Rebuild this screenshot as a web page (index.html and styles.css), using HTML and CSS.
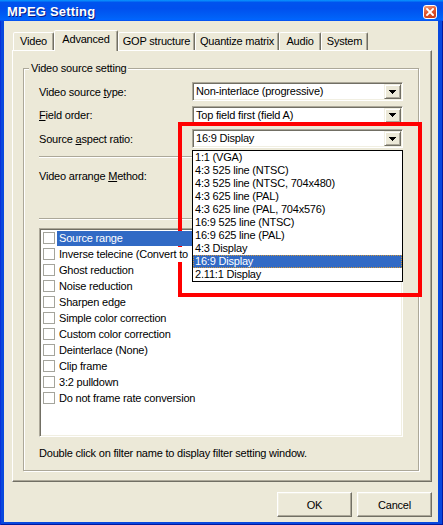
FILE: index.html
```html
<!DOCTYPE html>
<html lang="en">
<head>
<meta charset="utf-8">
<title>MPEG Setting</title>
<link rel="stylesheet" href="styles.css">
</head>
<body>
<div class="window">
  <div class="titlebar">
    <span class="title">MPEG Setting</span>
    <span class="close"><svg width="8" height="8" viewBox="0 0 8 8"><path d="M1 1L7 7M7 1L1 7" stroke="#fff" stroke-width="1.9" stroke-linecap="square"/></svg></span>
  </div>
  <div class="client">
    <div class="tabs">
      <div class="tab">Video</div>
      <div class="tab active">Advanced</div>
      <div class="tab">GOP structure</div>
      <div class="tab">Quantize matrix</div>
      <div class="tab">Audio</div>
      <div class="tab">System</div>
    </div>
    <div class="panel">
      <div class="group">
        <div class="group-title">Video source setting</div>
        <div class="field-row first">
          <span class="label">Video source <u>t</u>ype:</span>
          <div class="combo"><span class="combo-value">Non-interlace (progressive)</span><span class="combo-btn"><svg width="7" height="4" viewBox="0 0 7 4"><path d="M0 0h7v1H0zM1 1h5v1H1zM2 2h3v1H2zM3 3h1v1H3z"/></svg></span></div>
        </div>
        <div class="field-row">
          <span class="label"><u>F</u>ield order:</span>
          <div class="combo"><span class="combo-value">Top field first (field A)</span><span class="combo-btn"><svg width="7" height="4" viewBox="0 0 7 4"><path d="M0 0h7v1H0zM1 1h5v1H1zM2 2h3v1H2zM3 3h1v1H3z"/></svg></span></div>
        </div>
        <div class="field-row">
          <span class="label">Source <u>a</u>spect ratio:</span>
          <div class="combo"><span class="combo-value">16:9 Display</span><span class="combo-btn"><svg width="7" height="4" viewBox="0 0 7 4"><path d="M0 0h7v1H0zM1 1h5v1H1zM2 2h3v1H2zM3 3h1v1H3z"/></svg></span>
            <ul class="dropdown">
              <li>1:1 (VGA)</li>
              <li>4:3 525 line (NTSC)</li>
              <li>4:3 525 line (NTSC, 704x480)</li>
              <li>4:3 625 line (PAL)</li>
              <li>4:3 625 line (PAL, 704x576)</li>
              <li>16:9 525 line (NTSC)</li>
              <li>16:9 625 line (PAL)</li>
              <li>4:3 Display</li>
              <li class="selected">16:9 Display</li>
              <li>2.11:1 Display</li>
            </ul>
          </div>
        </div>
        <div class="sep first-sep"></div>
        <div class="field-row method">
          <span class="label">Video arrange <u>M</u>ethod:</span>
        </div>
        <div class="sep second-sep"></div>
        <div class="listbox">
          <div class="item selected over"><span class="check"></span><span class="item-label">Source range</span></div>
          <div class="item over"><span class="check"></span><span class="item-label">Inverse telecine (Convert to</span></div>
          <div class="item"><span class="check"></span><span class="item-label">Ghost reduction</span></div>
          <div class="item"><span class="check"></span><span class="item-label">Noise reduction</span></div>
          <div class="item"><span class="check"></span><span class="item-label">Sharpen edge</span></div>
          <div class="item"><span class="check"></span><span class="item-label">Simple color correction</span></div>
          <div class="item"><span class="check"></span><span class="item-label">Custom color correction</span></div>
          <div class="item"><span class="check"></span><span class="item-label">Deinterlace (None)</span></div>
          <div class="item"><span class="check"></span><span class="item-label">Clip frame</span></div>
          <div class="item"><span class="check"></span><span class="item-label">3:2 pulldown</span></div>
          <div class="item"><span class="check"></span><span class="item-label">Do not frame rate conversion</span></div>
        </div>
        <p class="hint">Double click on filter name to display filter setting window.</p>
      </div>
    </div>
    <div class="buttons">
      <button class="btn">OK</button>
      <button class="btn">Cancel</button>
    </div>
  </div>
  <div class="annotation"></div>
</div>
</body>
</html>
```
FILE: styles.css
```css
* { box-sizing: border-box; }
html, body { margin: 0; padding: 0; }
body {
  width: 443px;
  height: 525px;
  overflow: hidden;
  font-family: "Liberation Sans", Arial, sans-serif;
  font-size: 11px;
  letter-spacing: -0.2px;
  color: #000;
  background: #fff;
}
.window {
  position: relative;
  width: 443px;
  height: 525px;
  display: flex;
  flex-direction: column;
  background: #0848DE;
  box-shadow: inset 1px 0 #0831D9, inset -1px 0 #0019A0, inset 0 -1px #0019A0;
}
.titlebar {
  height: 21px;
  flex: none;
  display: flex;
  justify-content: space-between;
  align-items: flex-start;
  padding: 5px 6px 0 7px;
  background: linear-gradient(180deg, #0997ff, #0053ee 12%, #0050ee 40%, #0062f8 85%, #0066ff 92%, #005bff 96%, #0848DE);
}
.title {
  color: #fff;
  font-weight: bold;
  font-size: 13px;
  line-height: 14px;
  letter-spacing: 0.2px;
  text-shadow: 1px 1px #0A1883;
}
.close {
  width: 14px;
  height: 14px;
  border: 1px solid #fff;
  border-radius: 3px;
  background: linear-gradient(160deg, #F0A080, #E2582E 45%, #C73A17);
  display: flex;
  align-items: center;
  justify-content: center;
}
.client {
  flex: 1;
  margin: 0 5px 3px 4px;
  background: #ECE9D8;
  display: flex;
  flex-direction: column;
  padding: 9px 6px 5px 8px;
}
.tabs {
  display: flex;
  align-items: flex-end;
  height: 20px;
  flex: none;
  padding-left: 1px;
}
.tab {
  height: 18px;
  line-height: 17px;
  text-align: center;
  white-space: nowrap;
  border: 1px solid;
  border-bottom: none;
  border-color: #fff #716F64 transparent #fff;
  box-shadow: inset -1px 0 #ACA899;
  border-radius: 2px 2px 0 0;
  background: #ECE9D8;
}
.tab:nth-child(1) { width: 41px; }
.tab:nth-child(2) { width: 64px; }
.tab:nth-child(3) { width: 77px; }
.tab:nth-child(4) { width: 84px; }
.tab:nth-child(5) { width: 42px; }
.tab:nth-child(6) { width: 47px; }
.tab.active {
  height: 21px;
  margin-bottom: -1px;
  position: relative;
  z-index: 1;
}
.panel {
  height: 432px;
  flex: none;
  border: 1px solid;
  border-color: #fff #716F64 #716F64 #fff;
  box-shadow: inset -1px -1px #ACA899;
  padding: 0 12px 0 10px;
}
.group {
  margin-top: 17px;
  border: 1px solid #ACA899;
  box-shadow: 1px 1px 0 #fff, inset 1px 1px 0 #fff;
  padding: 0 15px 10.5px;
}
.group-title {
  display: table;
  margin: -7px 0 0 -10px;
  padding: 0 2px;
  line-height: 13px;
  background: #ECE9D8;
}
.field-row {
  display: flex;
  justify-content: space-between;
  align-items: center;
  height: 19px;
  margin-top: 4.5px;
}
.field-row.first { margin-top: 7px; }
.field-row.method { margin-top: 8.5px; }
.label { white-space: nowrap; }
.combo {
  position: relative;
  width: 211px;
  height: 19px;
  border: 1px solid;
  border-color: #ACA899 #fff #fff #ACA899;
  box-shadow: inset 1px 1px #716F64, inset -1px -1px #F1EFE2;
  padding: 1px;
  display: flex;
  background: #fff;
}
.combo-value {
  flex: 1;
  line-height: 15px;
  padding-left: 2px;
  white-space: nowrap;
  overflow: hidden;
}
.combo-btn {
  flex: none;
  width: 17px;
  height: 15px;
  background: #ECE9D8;
  border: 1px solid;
  border-color: #F1EFE2 #716F64 #716F64 #F1EFE2;
  box-shadow: inset 1px 1px #fff, inset -1px -1px #ACA899;
  display: flex;
  align-items: center;
  justify-content: center;
}
.combo-btn svg { display: block; fill: #000; }
.dropdown {
  position: absolute;
  left: -1px;
  top: 20px;
  width: 211px;
  margin: 0;
  padding: 0;
  list-style: none;
  background: #fff;
  border: 1px solid #000;
  z-index: 4;
}
.dropdown li {
  height: 13px;
  line-height: 13px;
  padding-left: 2px;
  white-space: nowrap;
}
.dropdown li.selected {
  background: #316AC5;
  color: #fff;
  outline: 1px dotted #CE953A;
  outline-offset: -1px;
}
.sep {
  height: 2px;
  border-top: 1px solid #ACA899;
  border-bottom: 1px solid #fff;
}
.first-sep { margin-top: 8px; }
.second-sep { margin-top: 32.5px; }
.listbox {
  margin-top: 8px;
  height: 209px;
  background: #fff;
  border: 1px solid;
  border-color: #ACA899 #fff #fff #ACA899;
  box-shadow: inset 1px 1px #716F64, inset -1px -1px #F1EFE2;
  padding: 2px 2px 0 1px;
}
.item {
  display: flex;
  align-items: flex-start;
  height: 16px;
}
.check {
  flex: none;
  width: 12px;
  height: 12px;
  margin: 1px 0 0 2px;
  border: 1px solid #A4A49C;
  background: #fff;
}
.item-label {
  flex: 1;
  height: 15px;
  line-height: 15px;
  margin-left: 2px;
  padding-left: 2px;
  white-space: nowrap;
  overflow: hidden;
}
.item.over .item-label {
  position: relative;
  z-index: 3;
  background: #fff;
}
.item.selected .item-label {
  background: #316AC5;
  color: #fff;
}
.hint {
  margin: 9.5px 0 0;
  line-height: 13px;
  white-space: nowrap;
}
.buttons {
  display: flex;
  justify-content: flex-end;
  gap: 5px;
  margin-top: 10px;
}
.btn {
  width: 75px;
  height: 25px;
  padding: 0;
  font-family: "Liberation Sans", Arial, sans-serif;
  font-size: 11px;
  letter-spacing: -0.2px;
  color: #000;
  background: #ECE9D8;
  border: 1px solid;
  border-color: #fff #716F64 #716F64 #fff;
  box-shadow: inset -1px -1px #ACA899, inset 1px 1px #F1EFE2;
}
.annotation {
  position: absolute;
  left: 178px;
  top: 122px;
  width: 244px;
  height: 175px;
  border: 4px solid #f00;
  z-index: 2;
  pointer-events: none;
}
```
